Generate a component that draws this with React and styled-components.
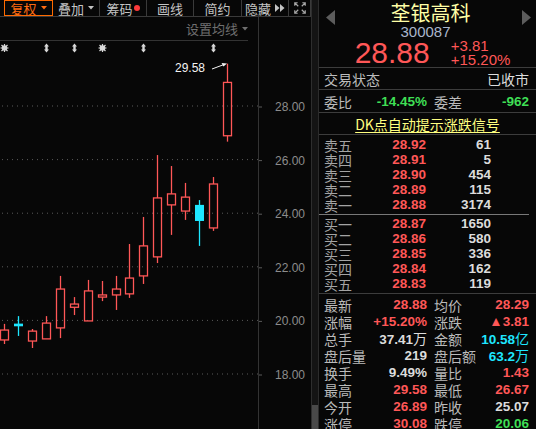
import styled, { createGlobalStyle } from 'styled-components'

const cjk = `"Noto Sans CJK SC", "Liberation Sans", sans-serif`
const num = `"Liberation Sans", "Noto Sans CJK SC", sans-serif`

const RED = '#ff5757'
const GREEN = '#3fdf55'
const CYAN = '#1ee6ff'
const WHITE = '#dcdcdc'

const GlobalStyle = createGlobalStyle`
  html, body {
    margin: 0;
    padding: 0;
    background: #070707;
    overflow: hidden;
  }
  * { box-sizing: border-box; }
`

const Page = styled.div`
  width: 536px;
  height: 429px;
  display: flex;
  background: #070707;
  font-family: ${cjk};
  overflow: hidden;
`

const LeftPanel = styled.div`
  width: 311px;
  display: flex;
  flex-direction: column;
`

const Toolbar = styled.div`
  height: 23px;
  display: flex;
  padding-left: 4px;
  border-bottom: 1px solid #3a3a3a;
`

const ToolBtn = styled.div`
  width: ${p => p.w}px;
  height: 100%;
  display: flex;
  align-items: center;
  justify-content: center;
  gap: 4px;
  font-size: 13px;
  line-height: 1;
  color: ${p => (p.active ? '#ff6c12' : '#c4c4c4')};
  border-right: 1px solid #3a3a3a;
  ${p => p.active && 'border: 1px solid #ff6a00;'}
`

const Dot = styled.span`
  width: 6px;
  height: 6px;
  border-radius: 50%;
  background: #ff3a3a;
  align-self: flex-start;
  margin-top: 5px;
  margin-left: -3px;
`

const ChartArea = styled.div`
  flex: 1;
  display: flex;
`

const Plot = styled.div`
  width: 259px;
  display: flex;
  flex-direction: column;
  border-right: 1px solid #333;
`

const MaBar = styled.div`
  height: 24px;
  margin-right: 10px;
  display: flex;
  align-items: center;
  justify-content: flex-end;
  gap: 4px;
  border-bottom: 1px solid #333;
  color: #6f6f6f;
  font-size: 13px;
`

const Axis = styled.div`
  flex: 1;
`

const ScrollTrack = styled.div`
  width: 7px;
  display: flex;
  flex-direction: column;
  justify-content: flex-end;
  background: #141414;
  border-left: 1px solid #2e2e2e;
`

const Thumb = styled.div`
  height: 24px;
  background: #494949;
`

const RightPanel = styled.div`
  flex: 1;
  display: flex;
  flex-direction: column;
  border-left: 1px solid #2c2c2c;
`

const Header = styled.div`
  height: 71px;
  display: flex;
  flex-direction: column;
  border-bottom: 1px solid #3c3c3c;
`

const NameRow = styled.div`
  height: 25px;
  display: flex;
  align-items: center;
  justify-content: space-between;
  padding: 0 5px 0 7px;
`

const ArrowBox = styled.div`
  display: flex;
  margin-top: 9px;
`

const Name = styled.div`
  font-size: 20px;
  line-height: 22px;
  color: #ffffa6;
  margin-left: 4px;
`

const Code = styled.div`
  text-align: center;
  font-family: ${num};
  font-size: 15px;
  line-height: 13px;
  color: #a9b6cc;
  margin-left: -4px;
`

const PriceRow = styled.div`
  display: flex;
  align-items: center;
  justify-content: center;
  gap: 21px;
  margin-top: 1px;
  padding-left: 10px;
`

const BigPrice = styled.div`
  font-family: ${num};
  font-size: 30px;
  line-height: 28px;
  color: ${RED};
`

const Change = styled.div`
  font-family: ${num};
  font-size: 15px;
  line-height: 14px;
  color: ${RED};
`

const Row = styled.div`
  height: ${p => p.h}px;
  display: flex;
  align-items: center;
  justify-content: space-between;
  padding: 1px 7px 0 5px;
  font-size: 14px;
  color: #bdbdbd;
  border-bottom: 1px solid #3c3c3c;
`

const Plain = styled.span`
  color: ${p => p.c || WHITE};
`

const DK = styled.div`
  height: 23px;
  display: flex;
  align-items: center;
  justify-content: center;
  padding-top: 1px;
  font-size: 14px;
  color: #ffff80;
  text-decoration: underline;
  text-underline-offset: 2px;
  border-bottom: 1px solid #3c3c3c;
`

const Book = styled.div`
  padding: ${p => p.pt}px 0 ${p => p.pb}px;
  border-bottom: 1px solid ${p => p.line};
  margin-right: ${p => p.mr || 0}px;
`

const BookRow = styled.div`
  height: 15px;
  display: grid;
  grid-template-columns: 45px 57px 65px;
  align-items: center;
  padding-left: 5px;
`

const StatGrid = styled.div`
  display: grid;
  grid-template-columns: 45px 58px 51px 51px;
  grid-auto-rows: ${p => p.rh}px;
  align-items: center;
  padding: ${p => p.pt || 0}px 7px 0 5px;
  ${p => p.border && 'border-bottom: 1px solid #3c3c3c;'}
`

const Label = styled.span`
  font-size: 14px;
  line-height: 1;
  color: ${p => p.c || '#bababa'};
  white-space: nowrap;
  padding-left: ${p => p.pl || 0}px;
`

const Val = styled.span`
  font-family: ${num};
  font-weight: bold;
  font-size: 13.5px;
  line-height: 1;
  text-align: right;
  color: ${p => p.c};
  white-space: nowrap;
`

const Unit = styled.span`
  font-family: ${cjk};
  font-weight: 400;
  font-size: 14px;
`

const Caret = ({ color }) => (
  <svg width="6" height="4" viewBox="0 0 6 4">
    <path d="M0 0h6L3 3.5z" fill={color} />
  </svg>
)

const SideArrow = ({ dir }) => (
  <ArrowBox>
    <svg width="9" height="15" viewBox="0 0 9 15">
      <path d={dir === 'left' ? 'M9 0v15L0 7.5z' : 'M0 0v15l9-7.5z'} fill="#5c5c5c" />
    </svg>
  </ArrowBox>
)

const DoubleTri = () => (
  <svg width="10" height="8" viewBox="0 0 10 8">
    <path d="M0 0l4.5 4L0 8zM5 0l4.5 4L5 8z" fill="#c4c4c4" />
  </svg>
)

const Expand = () => (
  <svg width="14" height="14" viewBox="0 0 24 24" fill="none" stroke="#a8a8a8" strokeWidth="2">
    <path d="m15 15 6 6M15 9l6-6M21 16v5h-5M21 8V3h-5M3 16v5h5M3 21l6-6M3 8V3h5M9 9 3 3" />
  </svg>
)

// price -> y inside the plot svg
const Y = p => 65 + (28 - p) * 26.8

const candles = [
  [19.27, 19.87, 19.12, 19.64],
  [19.88, 20.16, 19.42, 19.78],
  [19.23, 19.68, 18.97, 19.6],
  [19.31, 20.16, 19.31, 19.9],
  [19.72, 21.66, 19.34, 21.17],
  [20.49, 20.87, 20.2, 20.61],
  [19.98, 21.51, 19.98, 21.1],
  [20.87, 21.47, 20.72, 20.95],
  [20.95, 21.66, 20.39, 21.17],
  [20.99, 22.85, 20.84, 21.58],
  [21.66, 23.86, 21.36, 22.78],
  [22.37, 26.17, 22.14, 24.57],
  [24.31, 25.76, 23.19, 24.72],
  [24.08, 25.13, 23.75, 24.6],
  [24.31, 24.49, 22.78, 23.71],
  [23.45, 25.35, 23.34, 25.09],
  [26.89, 29.58, 26.67, 28.88],
]

const gridPrices = [28, 26, 24, 22, 20, 18]

const markers = [
  { i: 0, kind: 'sun' },
  { i: 3, kind: 'ud' },
  { i: 5, kind: 'ud' },
  { i: 7, kind: 'sun' },
  { i: 10, kind: 'ud' },
  { i: 15, kind: 'ud' },
]

const Candle = ({ i, o, h, l, c }) => {
  const x = Math.round(i * 13.94)
  const cx = x + 4.5
  if (c >= o) {
    const top = Y(c)
    const bot = Y(o)
    return (
      <g stroke={RED} strokeWidth="1.3" fill="none">
        <line x1={cx} x2={cx} y1={Y(h)} y2={top} />
        <line x1={cx} x2={cx} y1={bot} y2={Y(l)} />
        <rect x={x + 0.5} y={top} width="8" height={Math.max(bot - top, 1)} />
      </g>
    )
  }
  return (
    <g>
      <line x1={cx} x2={cx} y1={Y(h)} y2={Y(l)} stroke={CYAN} strokeWidth="1.3" />
      <rect x={x} y={Y(o)} width="9" height={Y(c) - Y(o)} fill={CYAN} />
    </g>
  )
}

const Marker = ({ i, kind }) => {
  const cx = Math.round(i * 13.94) + 4.5
  if (kind === 'sun') {
    return (
      <g stroke="#d8d8d8" strokeWidth="1.2" fill="#d8d8d8">
        <circle cx={cx} cy="7" r="2.2" />
        <path d={`M${cx - 4} 7h8M${cx} 3v8M${cx - 3} 4l6 6M${cx + 3} 4l-6 6`} />
      </g>
    )
  }
  return (
    <path
      d={`M${cx} 2.5l2.5 3h-1.3v3h1.3L${cx} 11.5l-2.5-3h1.3v-3h-1.3z`}
      fill="#d8d8d8"
    />
  )
}

const PlotChart = () => (
  <svg width="258" height="382" viewBox="0 0 258 382">
    {gridPrices.map(p => (
      <line key={p} x1="2" x2="258" y1={Y(p)} y2={Y(p)} stroke="#5a5a5a" strokeDasharray="1 4" />
    ))}
    {markers.map(m => (
      <Marker key={m.i} {...m} />
    ))}
    {candles.map(([o, h, l, c], i) => (
      <Candle key={i} i={i} o={o} h={h} l={l} c={c} />
    ))}
    <text x="175" y="31" fill="#f4f4f4" fontSize="12" fontFamily="Liberation Sans, sans-serif">
      29.58
    </text>
    <line x1="212" y1="28" x2="224" y2="23.5" stroke="#f4f4f4" strokeWidth="1" />
    <path d="M227 22.5l-5.5-0.5 2 3.5z" fill="#f4f4f4" />
  </svg>
)

const AxisLabels = () => (
  <svg width="51" height="407" viewBox="0 0 51 407">
    {gridPrices.map(p => (
      <g key={p}>
        <line x1="0" x2="3" y1={Y(p) + 25} y2={Y(p) + 25} stroke="#5a5a5a" />
        <text
          x="46"
          y={Y(p) + 25}
          textAnchor="end"
          dominantBaseline="central"
          fill="#8c8c8c"
          fontSize="12"
          fontFamily="Liberation Sans, sans-serif"
        >
          {p.toFixed(2)}
        </text>
      </g>
    ))}
  </svg>
)

const sells = [
  ['卖五', '28.92', '61'],
  ['卖四', '28.91', '5'],
  ['卖三', '28.90', '454'],
  ['卖二', '28.89', '115'],
  ['卖一', '28.88', '3174'],
]

const buys = [
  ['买一', '28.87', '1650'],
  ['买二', '28.86', '580'],
  ['买三', '28.85', '336'],
  ['买四', '28.84', '162'],
  ['买五', '28.83', '119'],
]

const stats = [
  ['最新', '28.88', RED, '均价', '28.29', RED],
  ['涨幅', '+15.20%', RED, '涨跌', '▲3.81', RED],
  ['总手', '37.41', WHITE, '金额', '10.58', CYAN, '万', '亿'],
  ['盘后量', '219', WHITE, '盘后额', '63.2', CYAN, null, '万'],
  ['换手', '9.49%', WHITE, '量比', '1.43', RED],
  ['最高', '29.58', RED, '最低', '26.67', RED],
  ['今开', '26.89', RED, '昨收', '25.07', WHITE],
  ['涨停', '30.08', RED, '跌停', '20.06', GREEN],
]

const BookRows = ({ rows }) =>
  rows.map(([label, price, vol]) => (
    <BookRow key={label}>
      <Label c="#a4a4a4">{label}</Label>
      <Val c={RED}>{price}</Val>
      <Val c={WHITE}>{vol}</Val>
    </BookRow>
  ))

const App = () => (
  <Page>
    <GlobalStyle />
    <LeftPanel>
      <Toolbar>
        <ToolBtn w={49} active>
          复权 <Caret color="#ff6c12" />
        </ToolBtn>
        <ToolBtn w={47}>
          叠加 <Caret color="#c4c4c4" />
        </ToolBtn>
        <ToolBtn w={47}>
          筹码<Dot />
        </ToolBtn>
        <ToolBtn w={47}>画线</ToolBtn>
        <ToolBtn w={48}>简约</ToolBtn>
        <ToolBtn w={47}>
          隐藏 <DoubleTri />
        </ToolBtn>
        <ToolBtn w={22}>
          <Expand />
        </ToolBtn>
      </Toolbar>
      <ChartArea>
        <Plot>
          <MaBar>
            设置均线 <Caret color="#6f6f6f" />
          </MaBar>
          <PlotChart />
        </Plot>
        <Axis>
          <AxisLabels />
        </Axis>
      </ChartArea>
    </LeftPanel>
    <ScrollTrack>
      <Thumb />
    </ScrollTrack>
    <RightPanel>
      <Header>
        <NameRow>
          <SideArrow dir="left" />
          <Name>荃银高科</Name>
          <SideArrow dir="right" />
        </NameRow>
        <Code>300087</Code>
        <PriceRow>
          <BigPrice>28.88</BigPrice>
          <Change>
            +3.81
            <br />
            +15.20%
          </Change>
        </PriceRow>
      </Header>
      <Row h={23}>
        交易状态 <Plain>已收市</Plain>
      </Row>
      <StatGrid rh={21} pt={1} border>
        <Label>委比</Label>
        <Val c={GREEN}>-14.45%</Val>
        <Label pl={7}>委差</Label>
        <Val c={GREEN}>-962</Val>
      </StatGrid>
      <DK>DK点自动提示涨跌信号</DK>
      <Book pt={2} pb={2} line="#787878" mr={7}>
        <BookRows rows={sells} />
      </Book>
      <Book pt={1} pb={2} line="#3c3c3c">
        <BookRows rows={buys} />
      </Book>
      <StatGrid rh={17} pt={2}>
        {stats.map(([l1, v1, c1, l2, v2, c2, u1, u2]) => [
          <Label key={l1}>{l1}</Label>,
          <Val key={l1 + 'v'} c={c1}>
            {v1}
            {u1 && <Unit>{u1}</Unit>}
          </Val>,
          <Label key={l2} pl={7}>
            {l2}
          </Label>,
          <Val key={l2 + 'v'} c={c2}>
            {v2}
            {u2 && <Unit>{u2}</Unit>}
          </Val>,
        ])}
      </StatGrid>
    </RightPanel>
  </Page>
)

export default App
